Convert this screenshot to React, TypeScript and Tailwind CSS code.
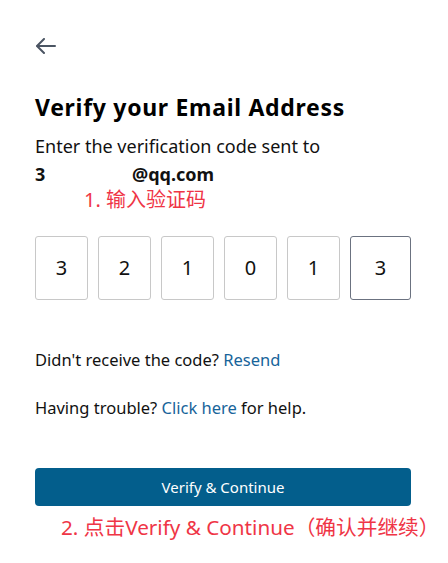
const digits = ["3", "2", "1", "0", "1", "3"];

function BackArrow() {
  return (
    <svg width="20" height="16" viewBox="0 0 20 16" fill="none" stroke="currentColor" strokeWidth="2" strokeLinecap="round" strokeLinejoin="round">
      <path d="M8 1 1 8l7 7" />
      <path d="M1.5 8H19" />
    </svg>
  );
}

export default function App() {
  return (
    <div className="w-[448px] h-[563px] bg-white font-['Noto_Sans',sans-serif] text-[#111]">
      <div className="px-[35px] pt-[38px]">
        <button className="text-[#4b5563] ml-[1px] block h-[16px]">
          <BackArrow />
        </button>

        <h1 className="mt-[38px] text-[23px] leading-[30px] font-bold tracking-[0.7px] text-black">
          Verify your Email Address
        </h1>
        <p className="mt-[12px] text-[18px] leading-[25px]">Enter the verification code sent to</p>
        <p className="mt-[3px] text-[18px] leading-[25px] font-bold flex">
          <span className="w-[97px]">3</span>
          <span>@qq.com</span>
        </p>
        <p className="ml-[49px] text-[20px] leading-[26px] text-[#ef3546] font-['Noto_Sans','Noto_Sans_CJK_SC',sans-serif]">
          1. 输入验证码
        </p>

        <div className="mt-[23px] flex gap-[10px]">
          {digits.map((d, i) => (
            <div
              key={i}
              className={
                i === 5
                  ? "w-[61px] h-[64px] rounded-[3px] border border-[#6b7280] flex items-center justify-center text-[20px]"
                  : "w-[53px] h-[64px] rounded-[3px] border border-[#c8c8c8] flex items-center justify-center text-[20px]"
              }
            >
              {d}
            </div>
          ))}
        </div>

        <p className="mt-[48px] text-[16.5px] leading-[24px]">
          Didn't receive the code? <span className="text-[#17649a]">Resend</span>
        </p>
        <p className="mt-[24px] text-[16.5px] leading-[24px]">
          Having trouble? <span className="text-[#17649a]">Click here</span> for help.
        </p>

        <button className="mt-[48px] w-[376px] h-[38px] rounded-[4px] bg-[#035e8c] text-white text-[15px] flex items-center justify-center">
          Verify &amp; Continue
        </button>
        <p className="mt-[6px] ml-[26px] text-[20.7px] leading-[30px] text-[#ef3546] font-['Noto_Sans','Noto_Sans_CJK_SC',sans-serif] whitespace-nowrap">
          2. 点击Verify &amp; Continue（确认并继续）
        </p>
      </div>
    </div>
  );
}
